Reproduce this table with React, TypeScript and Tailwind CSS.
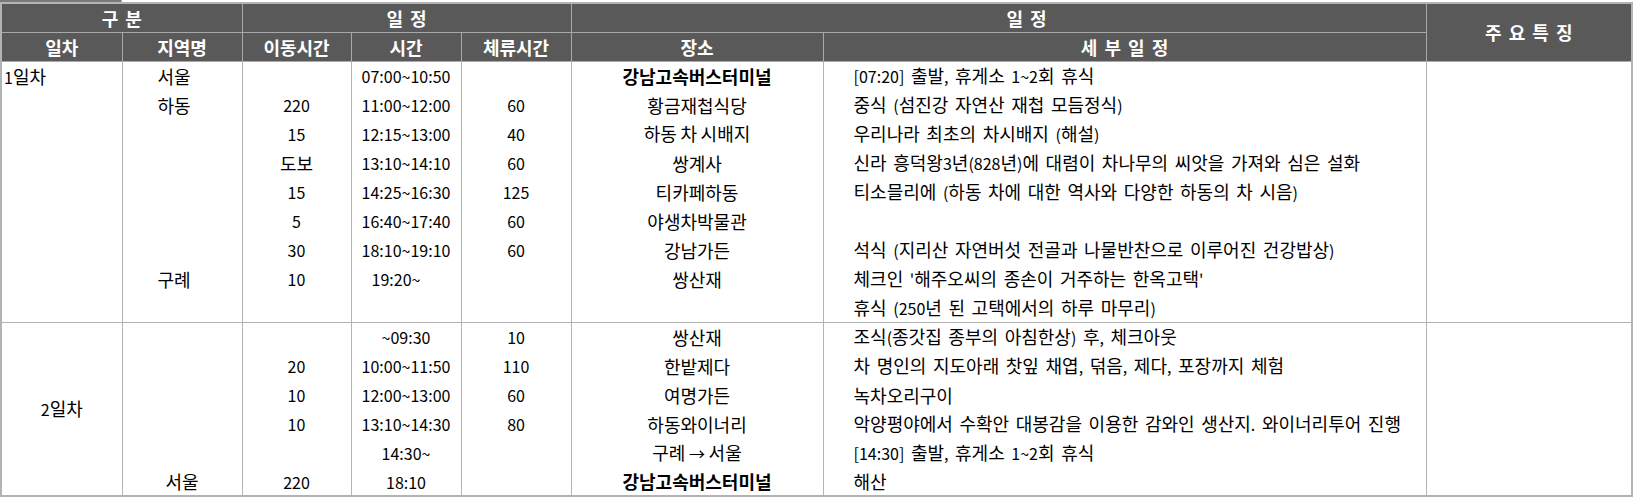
type Row = {
  region?: string;
  move?: string;
  time?: string;
  stay?: string;
  place?: string;
  bold?: boolean;
  detail?: string;
  regionCls?: string;
  timeCls?: string;
};

const day1: Row[] = [
  { region: "서울", time: "07:00~10:50", place: "강남고속버스터미널", bold: true, detail: "[07:20] 출발, 휴게소 1~2회 휴식", regionCls: "pr-4" },
  { region: "하동", move: "220", time: "11:00~12:00", stay: "60", place: "황금재첩식당", detail: "중식 (섬진강 자연산 재첩 모듬정식)", regionCls: "pr-4" },
  { move: "15", time: "12:15~13:00", stay: "40", place: "하동 차 시배지", detail: "우리나라 최초의 차시배지 (해설)" },
  { move: "도보", time: "13:10~14:10", stay: "60", place: "쌍계사", detail: "신라 흥덕왕3년(828년)에 대렴이 차나무의 씨앗을 가져와 심은 설화" },
  { move: "15", time: "14:25~16:30", stay: "125", place: "티카페하동", detail: "티소믈리에 (하동 차에 대한 역사와 다양한 하동의 차 시음)" },
  { move: "5", time: "16:40~17:40", stay: "60", place: "야생차박물관" },
  { move: "30", time: "18:10~19:10", stay: "60", place: "강남가든", detail: "석식 (지리산 자연버섯 전골과 나물반찬으로 이루어진 건강밥상)" },
  { region: "구례", move: "10", time: "19:20~", place: "쌍산재", detail: "체크인 '해주오씨의 종손이 거주하는 한옥고택'", regionCls: "pr-4", timeCls: "pr-5" },
  { detail: "휴식 (250년 된 고택에서의 하루 마무리)" },
];

const day2: Row[] = [
  { time: "~09:30", stay: "10", place: "쌍산재", detail: "조식(종갓집 종부의 아침한상) 후, 체크아웃" },
  { move: "20", time: "10:00~11:50", stay: "110", place: "한밭제다", detail: "차 명인의 지도아래 찻잎 채엽, 덖음, 제다, 포장까지 체험" },
  { move: "10", time: "12:00~13:00", stay: "60", place: "여명가든", detail: "녹차오리구이" },
  { move: "10", time: "13:10~14:30", stay: "80", place: "하동와이너리", detail: "악양평야에서 수확안 대봉감을 이용한 감와인 생산지. 와이너리투어 진행" },
  { time: "14:30~", place: "구례 → 서울", detail: "[14:30] 출발, 휴게소 1~2회 휴식" },
  { region: "서울", move: "220", time: "18:10", place: "강남고속버스터미널", bold: true, detail: "해산" },
];

// hangul glyphs are wider in the original font than latin ones, so latin runs get a smaller size
function T({ text }: { text?: string }) {
  if (!text) return null;
  const parts = text.split(/([\uAC00-\uD7A3]+)/).filter((p) => p !== "");
  return (
    <>
      {parts.map((p, i) =>
        /[\uAC00-\uD7A3]/.test(p) ? (
          <span key={i}>{p}</span>
        ) : (
          <span key={i} className="text-[16px]">
            {p}
          </span>
        )
      )}
    </>
  );
}

const th = "bg-[#595959] text-white font-bold text-center border border-[#a9a9a9] p-0 [word-spacing:3px]";
const td = "border-x border-[#b3b3b3] p-0 text-center whitespace-nowrap";

function DayRows({ label, rows, first }: { label: string; rows: Row[]; first?: boolean }) {
  return (
    <>
      {rows.map((r, i) => (
        <tr key={i} className={i === 0 ? "h-[29px] border-t border-[#b3b3b3]" : "h-[29px]"}>
          {i === 0 && (
            <td
              rowSpan={rows.length}
              className={
                first
                  ? "border-x border-[#b3b3b3] p-0 pl-[2px] align-top text-left pt-[3px]"
                  : "border-x border-[#b3b3b3] p-0 align-middle text-center"
              }
            >
              <T text={label} />
            </td>
          )}
          <td className={`${td} ${r.regionCls ?? ""}`}>{r.region}</td>
          <td className={td}><T text={r.move} /></td>
          <td className={`${td} ${r.timeCls ?? ""}`}><T text={r.time} /></td>
          <td className={td}><T text={r.stay} /></td>
          <td className={`${td} ${r.bold ? "font-bold" : ""}`}><T text={r.place} /></td>
          <td className="border-x border-[#b3b3b3] p-0 pl-[30px] text-left whitespace-nowrap [word-spacing:3px]">
            <T text={r.detail} />
          </td>
          {i === 0 && <td rowSpan={rows.length} className="border-x border-[#b3b3b3] p-0"></td>}
        </tr>
      ))}
    </>
  );
}

export default function App() {
  return (
    <div className="w-[1635px] h-[499px] bg-white font-['Noto_Sans_CJK_KR',sans-serif] text-[18px] text-black overflow-hidden">
      <div className="h-[2px] flex">
        <div className="w-[121px] bg-[#7a7a7a]" />
        <div className="w-px bg-[#b3b3b3]" />
      </div>
      <table className="border-collapse table-fixed w-[1631px] border-2 border-[#b3b3b3] leading-[22px]">
        <colgroup>
          <col className="w-[121px]" />
          <col className="w-[120px]" />
          <col className="w-[109px]" />
          <col className="w-[110px]" />
          <col className="w-[110px]" />
          <col className="w-[252px]" />
          <col className="w-[603px]" />
          <col className="w-[206px]" />
        </colgroup>
        <thead>
          <tr className="h-[29px]">
            <th colSpan={2} className={th}>구 분</th>
            <th colSpan={3} className={th}>일 정</th>
            <th colSpan={2} className={`${th} pl-[56px]`}>일 정</th>
            <th rowSpan={2} className={th}>주 요 특 징</th>
          </tr>
          <tr className="h-[29px]">
            <th className={th}>일차</th>
            <th className={th}>지역명</th>
            <th className={th}>이동시간</th>
            <th className={th}>시간</th>
            <th className={th}>체류시간</th>
            <th className={th}>장소</th>
            <th className={th}>세 부 일 정</th>
          </tr>
        </thead>
        <tbody>
          <DayRows label="1일차" rows={day1} first />
          <DayRows label="2일차" rows={day2} />
        </tbody>
      </table>
    </div>
  );
}
